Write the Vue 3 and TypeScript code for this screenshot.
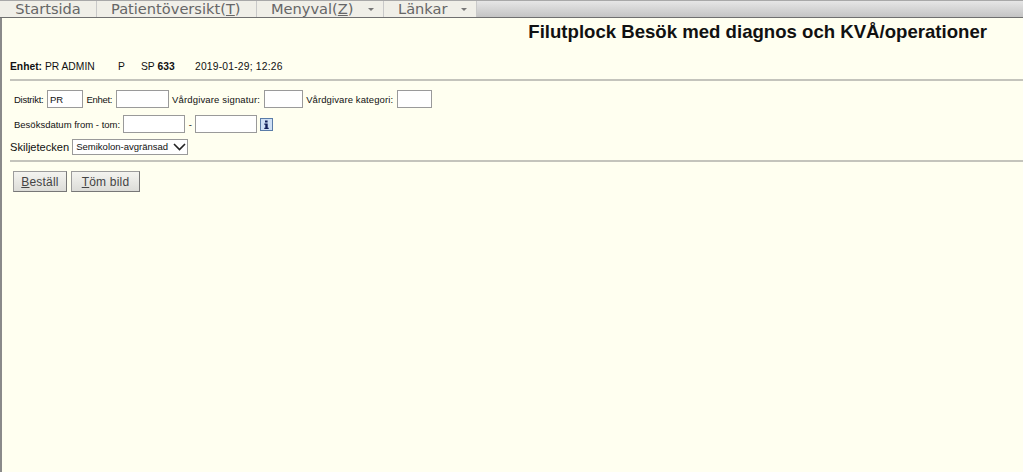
<script setup lang="ts">
const menu = [
  { pre: 'Startsida', key: '', post: '', w: 97, arrow: false, left: false },
  { pre: 'Patientöversikt(', key: 'T', post: ')', w: 160, arrow: false, left: true },
  { pre: 'Menyval(', key: 'Z', post: ')', w: 127, arrow: true, left: true },
  { pre: 'Länkar', key: '', post: '', w: 93, arrow: true, left: true },
]
</script>

<template>
  <div class="page">
    <nav class="menubar">
      <div v-for="m in menu" :key="m.pre" class="menuitem" :class="{ left: m.left }" :style="{ width: m.w + 'px' }">
        <span>{{ m.pre }}<u v-if="m.key">{{ m.key }}</u>{{ m.post }}</span>
        <i v-if="m.arrow" class="arrow"></i>
      </div>
    </nav>
    <main class="content">
      <h1 class="title">Filutplock Besök med diagnos och KVÅ/operationer</h1>
      <div class="info">
        <span class="enhet"><b>Enhet:</b> PR ADMIN</span>
        <span class="p">P</span>
        <span class="sp">SP <b class="num">633</b></span>
        <span class="date">2019-01-29; 12:26</span>
      </div>
      <hr class="rule" />
      <div class="row row1">
        <label class="tight">Distrikt:</label>
        <input class="w36" value="PR" />
        <label class="tighter">Enhet:</label>
        <input class="w53" />
        <label class="wide">Vårdgivare signatur:</label>
        <input class="w39" />
        <label class="wide2">Vårdgivare kategori:</label>
        <input class="w35" />
      </div>
      <div class="row row2">
        <label>Besöksdatum from - tom:</label>
        <input class="w62" />
        <span class="dash">-</span>
        <input class="w62" />
        <svg class="infoicon" width="13" height="13" viewBox="0 0 13 13">
          <rect x="0.5" y="0.5" width="12" height="12" fill="#cfe0f5" stroke="#5a7ca8" />
          <path d="M5 2.5h2.6v2H5zM4.3 5.5h3.4v4.2h1V11H4.3V9.700h1V6.800h-1z" fill="#12205a" />
        </svg>
      </div>
      <div class="row row3">
        <span class="sep">Skiljetecken</span>
        <div class="select">
          <span>Semikolon-avgränsad</span>
          <svg width="13" height="8" viewBox="0 0 13 8"><path d="M1 1l5.500 5.500L12 1" fill="none" stroke="#222" stroke-width="1.600" /></svg>
        </div>
      </div>
      <hr class="rule rule2" />
      <div class="buttons">
        <button type="button"><u>B</u>eställ</button>
        <button type="button" class="b2"><u>T</u>öm bild</button>
      </div>
    </main>
  </div>
</template>

<style>
html, body { margin: 0; background: #ffffef; }
</style>

<style scoped>
.page {
  width: 1023px;
  height: 472px;
  overflow: hidden;
  background: #fffff0;
  font-family: "Liberation Sans", Arial, sans-serif;
  color: #111;
  display: flex;
  flex-direction: column;
}
.menubar {
  display: flex;
  flex: none;
  height: 16px;
  border-top: 1px solid #a8a8a8;
  border-bottom: 1px solid #6f6f6f;
  background: linear-gradient(#e6e6e6, #c4c4c4);
}
.menuitem {
  height: 16px;
  box-sizing: border-box;
  background: #f0efe8;
  border-right: 1px solid #c9c9c9;
  font-family: "DejaVu Sans", Verdana, sans-serif;
  font-size: 14.600px;
  line-height: 16px;
  color: #666;
  display: flex;
  align-items: center;
  justify-content: center;
  gap: 14px;
  white-space: nowrap;
}
.menuitem.left {
  justify-content: flex-start;
  padding-left: 14px;
}
.arrow {
  width: 0;
  height: 0;
  border-left: 3px solid transparent;
  border-right: 3px solid transparent;
  border-top: 3px solid #777;
}
.content {
  flex: 1;
  border-left: 2px solid #8a8a8a;
  padding-top: 3px;
  display: flex;
  flex-direction: column;
}
.title {
  margin: 0;
  padding-right: 36px;
  text-align: right;
  font-size: 18.600px;
  line-height: 22px;
  font-weight: 700;
  color: #111;
  white-space: nowrap;
}
.info {
  display: flex;
  margin-top: 17px;
  padding-left: 8px;
  font-size: 10.300px;
  line-height: 14px;
  white-space: nowrap;
}
.enhet { width: 108px; }
.p { width: 23px; }
.sp { width: 54px; }
.num { font-weight: 700; }
.date { letter-spacing: 0.2px; }
.rule {
  margin: 5px 0 0 8px;
  border: 0;
  height: 2px;
  background: #c4c4bc;
}
.row {
  display: flex;
  align-items: center;
  padding-left: 12px;
  font-size: 9.500px;
  white-space: nowrap;
}
.row1 { margin-top: 9px; height: 18px; gap: 3.500px; }
.row2 { margin-top: 7px; height: 18px; gap: 3px; }
.row3 { margin-top: 4px; height: 19px; padding-left: 8px; gap: 3px; }
.tight { letter-spacing: -0.25px; }
.tighter { letter-spacing: -0.3px; }
.wide { letter-spacing: 0.15px; }
.wide2 { letter-spacing: 0.1px; }
input {
  box-sizing: border-box;
  height: 18px;
  border: 1px solid #9a9a9a;
  background: #fff;
  padding: 0 2px;
  font: 9.500px "Liberation Sans", Arial, sans-serif;
  color: #111;
  margin: 0;
  border-radius: 0;
  outline: none;
}
.w36 { width: 36px; }
.w53 { width: 53px; }
.w39 { width: 39px; }
.w35 { width: 35px; }
.w62 { width: 62px; }
.dash { margin: 0 0.500px; }
.infoicon { flex: none; }
.sep { font-size: 11.100px; }
.select {
  box-sizing: border-box;
  width: 116px;
  height: 16px;
  border: 1px solid #9a9a9a;
  background: #fff;
  font-size: 9.500px;
  padding: 0 1px 0 3px;
  display: flex;
  align-items: center;
  justify-content: space-between;
}
.rule2 { margin-top: 4px; }
.buttons {
  display: flex;
  gap: 4px;
  margin: 9px 0 0 11px;
}
button {
  box-sizing: border-box;
  height: 21px;
  width: 54px;
  padding: 0;
  border: 1px solid #9c9c9c;
  border-right-color: #777;
  border-bottom-color: #777;
  background: linear-gradient(#f4f4f0, #dcdcd8);
  font: 12px "Liberation Sans", Arial, sans-serif;
  letter-spacing: 0.2px;
  color: #444;
}
.b2 { width: 69px; }
</style>
